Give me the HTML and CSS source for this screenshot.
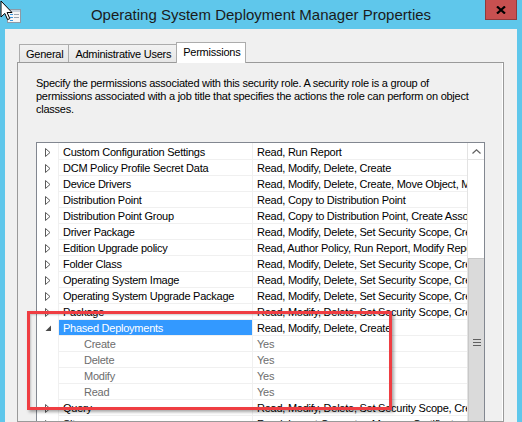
FILE: index.html
```html
<!DOCTYPE html>
<html lang="en">
<head>
    <meta charset="UTF-8">
    <title>Operating System Deployment Manager Properties</title>
    <link rel="stylesheet" href="styles.css">
</head>
<body>
    <div class="window">
        <div class="titlebar">
            <div class="title-left">
                <svg class="app-icon" width="14" height="14" viewBox="0 0 14 14">
                    <rect x="0.5" y="0.5" width="13" height="13" fill="#f6f6f6" stroke="#8d99a6"/>
                    <rect x="1" y="1" width="12" height="2" fill="#c9d3dc"/>
                    <rect x="3" y="5" width="3" height="1" fill="#3a96dd"/>
                    <rect x="7" y="5" width="5" height="1" fill="#9aa5b0"/>
                    <rect x="3" y="8" width="3" height="1" fill="#3a96dd"/>
                    <rect x="7" y="8" width="5" height="1" fill="#9aa5b0"/>
                    <rect x="3" y="11" width="3" height="1" fill="#3a96dd"/>
                </svg>
            </div>
            <div class="title">Operating System Deployment Manager Properties</div>
            <div class="title-right">
                <div class="close">
                    <svg width="10" height="8" viewBox="0 0 10 8">
                        <path d="M1 0.5 L9 7.5 M9 0.5 L1 7.5" stroke="#000" stroke-width="2.2"/>
                    </svg>
                </div>
            </div>
        </div>

        <div class="frame">
            <div class="tabs">
                <div class="tab">General</div>
                <div class="tab">Administrative Users</div>
                <div class="tab active">Permissions</div>
            </div>
            <div class="panel">
                <p class="intro">Specify the permissions associated with this security role. A security role is a group of permissions associated with a job title that specifies the actions the role can perform on object classes.</p>

                <div class="listbox">
                    <div class="rows">
                        <div class="row"><span class="exp"><svg width="6" height="9"><path d="M0.5 0.5 L5 4.5 L0.5 8.5 Z" fill="none" stroke="#5a5a5a"/></svg></span><span class="name">Custom Configuration Settings</span><span class="value">Read, Run Report</span></div>
                        <div class="row"><span class="exp"><svg width="6" height="9"><path d="M0.5 0.5 L5 4.5 L0.5 8.5 Z" fill="none" stroke="#5a5a5a"/></svg></span><span class="name">DCM Policy Profile Secret Data</span><span class="value">Read, Modify, Delete, Create</span></div>
                        <div class="row"><span class="exp"><svg width="6" height="9"><path d="M0.5 0.5 L5 4.5 L0.5 8.5 Z" fill="none" stroke="#5a5a5a"/></svg></span><span class="name">Device Drivers</span><span class="value">Read, Modify, Delete, Create, Move Object, Modify Folder</span></div>
                        <div class="row"><span class="exp"><svg width="6" height="9"><path d="M0.5 0.5 L5 4.5 L0.5 8.5 Z" fill="none" stroke="#5a5a5a"/></svg></span><span class="name">Distribution Point</span><span class="value">Read, Copy to Distribution Point</span></div>
                        <div class="row"><span class="exp"><svg width="6" height="9"><path d="M0.5 0.5 L5 4.5 L0.5 8.5 Z" fill="none" stroke="#5a5a5a"/></svg></span><span class="name">Distribution Point Group</span><span class="value">Read, Copy to Distribution Point, Create Association</span></div>
                        <div class="row"><span class="exp"><svg width="6" height="9"><path d="M0.5 0.5 L5 4.5 L0.5 8.5 Z" fill="none" stroke="#5a5a5a"/></svg></span><span class="name">Driver Package</span><span class="value">Read, Modify, Delete, Set Security Scope, Create</span></div>
                        <div class="row"><span class="exp"><svg width="6" height="9"><path d="M0.5 0.5 L5 4.5 L0.5 8.5 Z" fill="none" stroke="#5a5a5a"/></svg></span><span class="name">Edition Upgrade policy</span><span class="value">Read, Author Policy, Run Report, Modify Report</span></div>
                        <div class="row"><span class="exp"><svg width="6" height="9"><path d="M0.5 0.5 L5 4.5 L0.5 8.5 Z" fill="none" stroke="#5a5a5a"/></svg></span><span class="name">Folder Class</span><span class="value">Read, Modify, Delete, Set Security Scope, Create</span></div>
                        <div class="row"><span class="exp"><svg width="6" height="9"><path d="M0.5 0.5 L5 4.5 L0.5 8.5 Z" fill="none" stroke="#5a5a5a"/></svg></span><span class="name">Operating System Image</span><span class="value">Read, Modify, Delete, Set Security Scope, Create</span></div>
                        <div class="row"><span class="exp"><svg width="6" height="9"><path d="M0.5 0.5 L5 4.5 L0.5 8.5 Z" fill="none" stroke="#5a5a5a"/></svg></span><span class="name">Operating System Upgrade Package</span><span class="value">Read, Modify, Delete, Set Security Scope, Create</span></div>
                        <div class="row"><span class="exp"><svg width="6" height="9"><path d="M0.5 0.5 L5 4.5 L0.5 8.5 Z" fill="none" stroke="#5a5a5a"/></svg></span><span class="name">Package</span><span class="value">Read, Modify, Delete, Set Security Scope, Create</span></div>
                        <div class="row open"><span class="exp"><svg width="6" height="9"><path d="M6 1.5 L6 7 L0.5 7 Z" fill="#4a4a4a"/></svg></span><span class="name">Phased Deployments</span><span class="value">Read, Modify, Delete, Create</span></div>
                        <div class="row child"><span class="exp"></span><span class="name">Create</span><span class="value">Yes</span></div>
                        <div class="row child"><span class="exp"></span><span class="name">Delete</span><span class="value">Yes</span></div>
                        <div class="row child"><span class="exp"></span><span class="name">Modify</span><span class="value">Yes</span></div>
                        <div class="row child"><span class="exp"></span><span class="name">Read</span><span class="value">Yes</span></div>
                        <div class="row"><span class="exp"><svg width="6" height="9"><path d="M0.5 0.5 L5 4.5 L0.5 8.5 Z" fill="none" stroke="#5a5a5a"/></svg></span><span class="name">Query</span><span class="value">Read, Modify, Delete, Set Security Scope, Create</span></div>
                        <div class="row"><span class="exp"><svg width="6" height="9"><path d="M0.5 0.5 L5 4.5 L0.5 8.5 Z" fill="none" stroke="#5a5a5a"/></svg></span><span class="name">Site</span><span class="value">Read, Import Computer, Manage Certificate</span></div>
                    </div>
                    <div class="scrollbar">
                        <div class="sb-up">
                            <svg width="9" height="5" viewBox="0 0 9 5"><path d="M0.5 4.5 L4.5 0.8 L8.5 4.5" fill="none" stroke="#606060" stroke-width="1.2"/></svg>
                        </div>
                        <div class="sb-track"></div>
                        <div class="sb-thumb">
                            <svg width="8" height="7" viewBox="0 0 8 7"><path d="M0 0.5 H8 M0 3.5 H8 M0 6.5 H8" stroke="#606060"/></svg>
                        </div>
                    </div>
                </div>
            </div>
        </div>

        <!-- red callout drawn around the expanded entry -->
        <div class="callout"></div>

        <svg class="pointer" width="13" height="21" viewBox="0 0 13 21">
            <path d="M1 1 L1 17 L4.8 13.4 L7.6 19.6 L9.8 18.6 L7.1 12.5 L12 12.5 Z" fill="#fff" stroke="#000" stroke-width="1" stroke-linejoin="miter"/>
        </svg>
    </div>
</body>
</html>
```

FILE: styles.css
```css
body {
    margin: 0;
    background: #5fc7eb;
    font-family: "Liberation Sans", Arial, sans-serif;
    font-size: 11px;
    letter-spacing: -0.25px;
    color: #000;
}

.window {
    position: relative;
    width: 522px;
    height: 422px;
    overflow: hidden;
    display: flex;
    flex-direction: column;
}

/* title bar */
.titlebar {
    height: 29px;
    display: grid;
    grid-template-columns: 1fr auto 1fr;
    align-items: center;
}
.title-left {
    padding-left: 7px;
    padding-top: 2px;
}
.app-icon {
    display: block;
}
.title {
    font-size: 15px;
    letter-spacing: 0;
    color: #1b1b1b;
}
.title-right {
    display: flex;
    justify-content: flex-end;
    align-self: start;
    padding-right: 5px;
}
.close {
    width: 32px;
    height: 20px;
    box-sizing: border-box;
    background: #c75050;
    border: 1px solid #8f3b3b;
    border-top: 0;
    display: flex;
    align-items: center;
    justify-content: center;
}

/* window body */
.frame {
    flex: 1;
    margin: 0 5px;
    background: #f0f0f0;
    padding: 13px 13px 0 12px;
    display: flex;
    flex-direction: column;
    min-height: 0;
}

.tabs {
    display: flex;
    align-items: flex-end;
    height: 21px;
    padding-left: 2px;
    margin-bottom: -1px;
}
.tab {
    height: 18px;
    box-sizing: border-box;
    margin-bottom: 1px;
    margin-right: -1px;
    padding: 3px 5px 0 6px;
    border: 1px solid #acacac;
    border-bottom: 0;
    background: linear-gradient(#f2f2f2, #e6e6e6);
    white-space: nowrap;
}
.tab.active {
    position: relative;
    z-index: 1;
    height: 21px;
    margin-bottom: 0;
    padding: 3px 5px 0 6px;
    background: #fff;
}

.panel {
    flex: 1;
    border: 1px solid #9a9a9a;
    box-shadow: inset -1px 0 0 #fff;
    padding: 14px 18px 0 18px;
    min-height: 0;
    overflow: hidden;
}

.intro {
    margin: 0 0 26px;
    line-height: 13px;
}

/* permissions list */
.listbox {
    height: 320px;
    border: 1px solid #828790;
    background: #fff;
    display: grid;
    grid-template-columns: 1fr 17px;
}
.rows {
    overflow: hidden;
}
.row {
    display: grid;
    grid-template-columns: 21px 194px 1fr;
    height: 16px;
}
.row:first-child {
    height: 17px;
}
.exp {
    display: flex;
    align-items: center;
    padding-left: 8px;
    padding-top: 1px;
}
.exp svg {
    display: block;
}
.name,
.value {
    border-bottom: 1px solid #f0f0f0;
    white-space: nowrap;
    overflow: hidden;
    line-height: 14px;
    padding-top: 1px;
}
.row:first-child .name,
.row:first-child .value {
    padding-top: 2px;
}
.name {
    padding-left: 4px;
    border-left: 1px solid #f0f0f0;
}
.value {
    padding-left: 4px;
    border-left: 1px solid #f0f0f0;
}
.row.open .name {
    background: #3399ff;
    color: #fff;
}
.row.child .name {
    padding-left: 25px;
}
.row.child .name,
.row.child .value {
    color: #6d6d6d;
}

.scrollbar {
    border-left: 1px solid #e3e3e3;
    display: flex;
    flex-direction: column;
}
.sb-up {
    height: 16px;
    border-bottom: 1px solid #e3e3e3;
    display: flex;
    align-items: center;
    justify-content: center;
}
.sb-track {
    height: 98px;
}
.sb-thumb {
    height: 166px;
    background: #dadada;
    border: 1px solid #c8c8c8;
    border-right: 0;
    display: flex;
    align-items: center;
    justify-content: center;
}
.sb-thumb svg {
    margin-left: 1px;
}

/* annotation frame and mouse pointer */
.callout {
    position: absolute;
    left: 27px;
    top: 311px;
    width: 365px;
    height: 99px;
    box-sizing: border-box;
    border: 3px solid #ef3d42;
    box-shadow: 2px 2px 3px rgba(0, 0, 0, 0.35), inset 1px 1px 2px rgba(0, 0, 0, 0.2);
}
.pointer {
    position: absolute;
    left: 0;
    top: 0;
}
```
